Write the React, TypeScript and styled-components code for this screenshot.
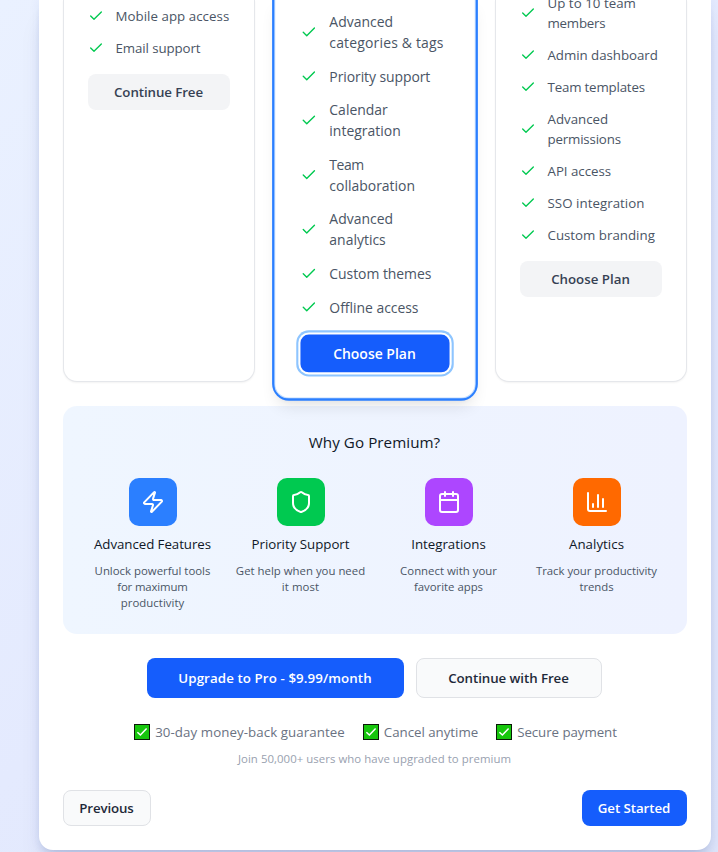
import React from "react";
import styled, { createGlobalStyle, css } from "styled-components";
import { Calendar, ChartColumn, Check, Shield, Zap } from "lucide-react";

const GlobalStyle = createGlobalStyle`
  *, *::before, *::after { box-sizing: border-box; }
  body {
    margin: 0;
    overflow: hidden;
    color: #101828;
    font-family: "Open Sans", "Noto Sans", sans-serif;
    font-size: 13.3px;
    line-height: 20px;
  }
  h3, h4, p, ul { margin: 0; padding: 0; font-weight: 400; }
  ul { list-style: none; }
  button { font-family: inherit; cursor: pointer; }
`;

const Page = styled.div`
  height: 852px;
  padding: 0 7px 0 39px;
  overflow: hidden;
  background: linear-gradient(135deg, #eaf1ff 0%, #e4eafe 50%, #dfe6fb 100%);
`;

const Modal = styled.main`
  height: 850px;
  padding: 0 24px 24px;
  border-radius: 0 0 14px 14px;
  background: #fff;
  box-shadow: 0 20px 25px -5px rgba(20, 40, 110, 0.1), 0 8px 10px -4px rgba(20, 40, 110, 0.12),
    0 0 12px rgba(20, 60, 150, 0.07);
`;

const Tracked = styled.span<{ $tracking?: number }>`
  letter-spacing: ${(p) => p.$tracking ?? 0}px;
`;

const Plans = styled.section`
  display: grid;
  grid-template-columns: repeat(3, 1fr);
  gap: 24px;
  height: 382px;
`;

const Features = styled.ul`
  display: flex;
  flex-direction: column;
  gap: 12px;
  margin-bottom: 16px;
`;

const Plan = styled.article<{ $offset?: number; $popular?: boolean }>`
  padding: 0 24px 24px;
  border: 1px solid #e5e7eb;
  border-top: 0;
  border-radius: 0 0 14px 14px;
  background: #fff;
  box-shadow: 0 1px 2px rgba(0, 0, 0, 0.05);

  & > ${Features} { margin-top: ${(p) => p.$offset ?? 0}px; }

  ${(p) =>
    p.$popular &&
    css`
      display: flex;
      flex-direction: column;
      justify-content: flex-end;
      border-color: #bedbff;
      transform: scale(1.05);
      transform-origin: 50% 50px;
      box-shadow: 0 0 0 2px #2b7fff, 0 10px 15px -3px rgba(0, 0, 0, 0.1),
        0 4px 6px -4px rgba(0, 0, 0, 0.1);
    `}
`;

const Feature = styled.li`
  display: flex;
  align-items: center;
  gap: 11.5px;
  color: #4a5565;

  svg { flex: none; color: #00c950; }
`;

const Button = styled.button<{
  $variant: "muted" | "primary" | "outline";
  $width?: number;
  $height?: number;
  $focused?: boolean;
}>`
  display: flex;
  align-items: center;
  justify-content: center;
  width: ${(p) => (p.$width ? `${p.$width}px` : "100%")};
  height: ${(p) => p.$height ?? 36}px;
  padding: 0 1px 0 0;
  border: ${(p) => (p.$variant === "outline" ? "1px solid #e0e2e6" : "0")};
  border-radius: 8px;
  font-size: 13.3px;
  line-height: 20px;
  font-weight: 600;
  white-space: nowrap;
  color: ${(p) => ({ muted: "#364153", primary: "#fff", outline: "#1e2939" })[p.$variant]};
  background: ${(p) => ({ muted: "#f3f4f6", primary: "#155dfc", outline: "#f9fafb" })[p.$variant]};
  ${(p) => p.$focused && "box-shadow: 0 0 0 2px #fff, 0 0 0 4px #8ec5ff;"}
`;

const Premium = styled.section`
  height: 228px;
  margin-top: 24px;
  padding: 24px;
  border-radius: 14px;
  text-align: center;
  background: linear-gradient(90deg, #eff6ff, #eef2ff);
`;

const PremiumTitle = styled.h3`
  margin-bottom: 24px;
  padding-right: 1px;
  font-size: 15.2px;
  line-height: 24px;
`;

const Benefits = styled.div`
  display: grid;
  grid-template-columns: repeat(4, 1fr);
  gap: 16px;
`;

const Benefit = styled.div`
  display: flex;
  flex-direction: column;
  align-items: center;

  h4 { margin: 8px 1px 9px 0; }
`;

const BenefitIcon = styled.div<{ $color: string }>`
  display: grid;
  place-items: center;
  width: 48px;
  height: 48px;
  border-radius: 10px;
  color: #fff;
  background: ${(p) => p.$color};
`;

const BenefitText = styled.p`
  padding-right: 1px;
  color: #4a5565;
  font-size: 11.4px;
  line-height: 16px;

  span { display: block; }
`;

const Actions = styled.div`
  display: flex;
  justify-content: center;
  gap: 12px;
  margin-top: 24px;
  padding-right: 1px;
`;

const Guarantees = styled.div`
  display: flex;
  justify-content: center;
  gap: 18px;
  margin-top: 24px;
  padding-left: 1px;
  color: #6a7282;
`;

const Guarantee = styled.span`
  display: flex;
  align-items: center;
  gap: 5px;
`;

const Joined = styled.p`
  margin-top: 9px;
  padding-right: 1px;
  color: #99a1af;
  font-size: 11.4px;
  line-height: 16px;
  text-align: center;
`;

const Footer = styled.footer`
  display: flex;
  justify-content: space-between;
  margin-top: 23px;
`;

type Line = [text: string, tracking?: number];

const freeFeatures: Line[][] = [[["Mobile app access", 0.04]], [["Email support", -0.09]]];

const proFeatures: Line[][] = [
  [["Advanced"], ["categories & tags", 0.16]],
  [["Priority support", -0.08]],
  [["Calendar"], ["integration"]],
  [["Team", -0.4], ["collaboration"]],
  [["Advanced"], ["analytics"]],
  [["Custom themes", -0.05]],
  [["Offline access", -0.03]],
];

const teamFeatures: Line[][] = [
  [["Up to 10 team", 0.03], ["members", -0.22]],
  [["Admin dashboard", -0.04]],
  [["Team templates", -0.18]],
  [["Advanced"], ["permissions", -0.17]],
  [["API access", -0.03]],
  [["SSO integration", 0.04]],
  [["Custom branding"]],
];

const benefits: { icon: typeof Zap; color: string; title: Line; lines: Line[] }[] = [
  {
    icon: Zap,
    color: "#2b7fff",
    title: ["Advanced Features", -0.06],
    lines: [["Unlock powerful tools"], ["for maximum", -0.14], ["productivity", 0.03]],
  },
  {
    icon: Shield,
    color: "#00c950",
    title: ["Priority Support", -0.02],
    lines: [["Get help when you need"], ["it most", 0.08]],
  },
  {
    icon: Calendar,
    color: "#ad46ff",
    title: ["Integrations", -0.02],
    lines: [["Connect with your"], ["favorite apps", -0.03]],
  },
  {
    icon: ChartColumn,
    color: "#ff6900",
    title: ["Analytics", 0.03],
    lines: [["Track your productivity", -0.04], ["trends", -0.08]],
  },
];

const guarantees: Line[] = [
  ["30-day money-back guarantee", 0.07],
  ["Cancel anytime", -0.02],
  ["Secure payment", -0.06],
];

function FeatureList({ items }: { items: Line[][] }) {
  return (
    <Features>
      {items.map((lines) => (
        <Feature key={lines.map((l) => l[0]).join(" ")}>
          <Check size={16} />
          <div>
            {lines.map(([text, tracking]) => (
              <div key={text}>
                <Tracked $tracking={tracking}>{text}</Tracked>
              </div>
            ))}
          </div>
        </Feature>
      ))}
    </Features>
  );
}

function CheckEmoji() {
  return (
    <svg width="16" height="16" viewBox="0 0 16 16" aria-hidden="true">
      <rect x="0.5" y="0.5" width="15" height="15" fill="#16c60c" stroke="#0a1a08" />
      <path d="M3.4 8.2 6.4 11 12.6 4.4" fill="none" stroke="#fff" strokeWidth="1.5" />
    </svg>
  );
}

export default function App() {
  return (
    <>
      <GlobalStyle />
      <Page>
        <Modal>
          <Plans>
            <Plan $offset={6}>
              <FeatureList items={freeFeatures} />
              <Button $variant="muted">
                <Tracked $tracking={-0.09}>Continue Free</Tracked>
              </Button>
            </Plan>
            <Plan $popular>
              <FeatureList items={proFeatures} />
              <Button $variant="primary" $focused>
                Choose Plan
              </Button>
            </Plan>
            <Plan $offset={-7}>
              <FeatureList items={teamFeatures} />
              <Button $variant="muted">Choose Plan</Button>
            </Plan>
          </Plans>

          <Premium>
            <PremiumTitle>
              <Tracked $tracking={0.05}>Why Go Premium?</Tracked>
            </PremiumTitle>
            <Benefits>
              {benefits.map(({ icon: Icon, color, title, lines }) => (
                <Benefit key={title[0]}>
                  <BenefitIcon $color={color}>
                    <Icon size={24} />
                  </BenefitIcon>
                  <h4>
                    <Tracked $tracking={title[1]}>{title[0]}</Tracked>
                  </h4>
                  <BenefitText>
                    {lines.map(([text, tracking]) => (
                      <Tracked key={text} $tracking={tracking}>
                        {text}
                      </Tracked>
                    ))}
                  </BenefitText>
                </Benefit>
              ))}
            </Benefits>
          </Premium>

          <Actions>
            <Button $variant="primary" $width={257} $height={40}>
              <Tracked $tracking={0.1}>Upgrade to Pro - $9.99/month</Tracked>
            </Button>
            <Button $variant="outline" $width={186} $height={40}>
              <Tracked $tracking={-0.07}>Continue with Free</Tracked>
            </Button>
          </Actions>
          <Guarantees>
            {guarantees.map(([text, tracking]) => (
              <Guarantee key={text}>
                <CheckEmoji />
                <Tracked $tracking={tracking}>{text}</Tracked>
              </Guarantee>
            ))}
          </Guarantees>
          <Joined>
            <Tracked $tracking={0.05}>Join 50,000+ users who have upgraded to premium</Tracked>
          </Joined>
          <Footer>
            <Button $variant="outline" $width={88}>
              <Tracked $tracking={-0.12}>Previous</Tracked>
            </Button>
            <Button $variant="primary" $width={105}>
              <Tracked $tracking={-0.07}>Get Started</Tracked>
            </Button>
          </Footer>
        </Modal>
      </Page>
    </>
  );
}
